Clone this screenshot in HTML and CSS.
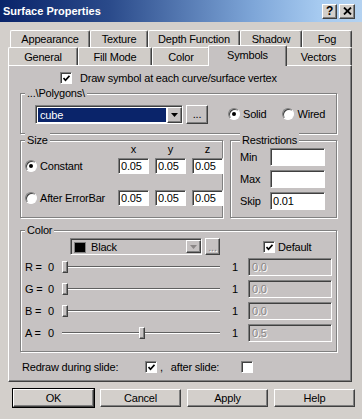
FILE: index.html
```html
<!DOCTYPE html>
<html>
<head>
<meta charset="utf-8">
<link rel="stylesheet" href="styles.css">
</head>
<body>
<div class="titlebar">
  <span class="title">Surface Properties</span>
  <div class="tbtns">
    <span class="tbtn q">?</span>
    <span class="tbtn x"><svg width="9" height="8" viewBox="0 0 9 8"><path d="M1 0.5 L8 7.5 M8 0.5 L1 7.5" stroke="#000" stroke-width="1.8"/></svg></span>
  </div>
</div>

<div class="tabs">
  <div class="tabrow row1">
    <span class="tab w-app">Appearance</span>
    <span class="tab w-tex">Texture</span>
    <span class="tab w-dep">Depth Function</span>
    <span class="tab w-sha">Shadow</span>
    <span class="tab w-fog">Fog</span>
  </div>
  <div class="tabrow row2">
    <span class="tab w-gen">General</span>
    <span class="tab w-fil">Fill Mode</span>
    <span class="tab w-col">Color</span>
    <span class="tab w-sym sel">Symbols</span>
    <span class="tab w-vec">Vectors</span>
  </div>
</div>

<div class="panel">
  <div class="chkrow">
    <span class="chk"><svg width="7" height="7" viewBox="0 0 7 7"><polyline points="0.5,3 2.5,5.2 6.5,0.8" fill="none" stroke="#000" stroke-width="1.7"/></svg></span>
    <span class="chklabel">Draw symbol at each curve/surface vertex</span>
  </div>

  <div class="group g-poly">
    <span class="legend">...\Polygons\</span>
    <div class="combo combo-poly">
      <span class="combo-val">cube</span>
      <span class="drop"><svg width="7" height="4" viewBox="0 0 7 4"><polygon points="0,0 7,0 3.5,4" fill="#000"/></svg></span>
    </div>
    <span class="btn dots">...</span>
    <span class="radio on r-solid"></span><span class="rlabel">Solid</span>
    <span class="radio r-wired"></span><span class="rlabel">Wired</span>
  </div>

  <div class="midrow">
    <div class="group g-size">
      <span class="legend">Size</span>
      <div class="size-grid">
        <span></span><span class="hdr">x</span><span class="hdr">y</span><span class="hdr">z</span>
        <span class="rcell"><span class="radio on"></span><span class="rlabel">Constant</span></span>
        <span class="field">0.05</span><span class="field">0.05</span><span class="field">0.05</span>
        <span class="rcell"><span class="radio"></span><span class="rlabel">After ErrorBar</span></span>
        <span class="field">0.05</span><span class="field">0.05</span><span class="field">0.05</span>
      </div>
    </div>
    <div class="group g-restr">
      <span class="legend lg-restr">Restrictions</span>
      <div class="restr-grid">
        <span class="rl">Min</span><span class="field tall"></span>
        <span class="rl">Max</span><span class="field tall"></span>
        <span class="rl">Skip</span><span class="field tall">0.01</span>
      </div>
    </div>
  </div>

  <div class="group g-color">
    <span class="legend">Color</span>
    <div class="colortop">
      <div class="combo combo-color">
        <span class="swatch"></span>
        <span class="cname">Black</span>
        <span class="drop dis"><svg width="7" height="4" viewBox="0 0 7 4"><polygon points="0,0 7,0 3.5,4" fill="#8a8686"/></svg></span>
      </div>
      <span class="btn dots small dis-text">...</span>
      <span class="chk def"><svg width="7" height="7" viewBox="0 0 7 7"><polyline points="0.5,3 2.5,5.2 6.5,0.8" fill="none" stroke="#000" stroke-width="1.7"/></svg></span>
      <span class="chklabel">Default</span>
    </div>
    <div class="srow">
      <span>R =</span><span class="zero">0</span>
      <span class="slider"><span class="track"></span><span class="thumb" style="left:0px"></span></span>
      <span class="one">1</span><span class="dfield">0.0</span>
    </div>
    <div class="srow">
      <span>G =</span><span class="zero">0</span>
      <span class="slider"><span class="track"></span><span class="thumb" style="left:0px"></span></span>
      <span class="one">1</span><span class="dfield">0.0</span>
    </div>
    <div class="srow">
      <span>B =</span><span class="zero">0</span>
      <span class="slider"><span class="track"></span><span class="thumb" style="left:0px"></span></span>
      <span class="one">1</span><span class="dfield">0.0</span>
    </div>
    <div class="srow">
      <span>A =</span><span class="zero">0</span>
      <span class="slider"><span class="track"></span><span class="thumb" style="left:77px"></span></span>
      <span class="one">1</span><span class="dfield">0.5</span>
    </div>
  </div>

  <div class="redraw">
    <span class="rd-label">Redraw during slide:</span>
    <span class="chk"><svg width="7" height="7" viewBox="0 0 7 7"><polyline points="0.5,3 2.5,5.2 6.5,0.8" fill="none" stroke="#000" stroke-width="1.7"/></svg></span>
    <span class="comma">,</span>
    <span class="after">after slide:</span>
    <span class="chk"></span>
  </div>
</div>

<div class="buttons">
  <span class="btn pb def-btn">OK</span>
  <span class="btn pb">Cancel</span>
  <span class="btn pb">Apply</span>
  <span class="btn pb">Help</span>
</div>
</body>
</html>
```

FILE: styles.css
```css
* { box-sizing: border-box; }
html, body { margin: 0; padding: 0; }
body {
  width: 362px;
  height: 419px;
  overflow: hidden;
  background: #d3cfcb;
  font: 11px/14px "Liberation Sans", Arial, sans-serif;
  letter-spacing: -0.2px;
  color: #000;
}

/* title bar */
.titlebar {
  height: 22px;
  display: flex;
  align-items: center;
  justify-content: space-between;
  padding: 0 7px 0 3px;
  background: linear-gradient(to right, #0a246a 0%, #2a4a8a 30%, #7ea6d8 70%, #a6caf0 88%, #b4d2f0 100%);
}
.title { color: #fff; font-weight: bold; font-size: 11px; letter-spacing: 0; }
.tbtns { display: flex; gap: 2px; }
.tbtn {
  width: 15px; height: 15px;
  display: flex; align-items: center; justify-content: center;
  background: #d3cfcb;
  border-top: 1px solid #fff; border-left: 1px solid #fff;
  border-right: 1px solid #404040; border-bottom: 1px solid #404040;
  box-shadow: inset -1px -1px 0 #808080;
  font-weight: bold; font-size: 12px;
}
.tbtn.x { width: 16px; }

/* tabs */
.tabs { padding-top: 8px; }
.tabrow { display: flex; }
.row1 { padding-left: 10px; height: 17px; }
.row2 { padding-left: 8px; height: 18px; }
.tab {
  display: flex; align-items: center; justify-content: center;
  flex: 0 0 auto;
  border-top: 1px solid #fff;
  border-left: 1px solid #fff;
  border-right: 1px solid #404040;
  border-radius: 2px 2px 0 0;
  box-shadow: inset -1px 0 0 #808080;
  background: #d0ccc8;
}
.w-app { width: 80px; } .w-tex { width: 58px; } .w-dep { width: 92px; } .w-sha { width: 62px; } .w-fog { width: 50px; }
.w-gen { width: 70px; } .w-fil { width: 74px; } .w-col { width: 58px; } .w-sym { width: 75px; } .w-vec { width: 67px; }
.tab.sel {
  width: 79px;
  margin: -2px -2px -1px;
  height: 21px;
  padding-bottom: 3px;
  position: relative;
  z-index: 1;
  background: #c6c2c2;
}

/* panel */
.panel {
  margin-left: 8px;
  width: 344px;
  height: 317px;
  background: #c6c2c2;
  border-top: 1px solid #fff;
  border-left: 1px solid #fff;
  border-right: 1px solid #404040;
  border-bottom: 1px solid #404040;
  box-shadow: inset -1px -1px 0 #808080;
  padding: 5px 0 0 11px;
  display: flex;
  flex-direction: column;
}

.chkrow { display: flex; align-items: center; height: 14px; margin-left: 40px; }
.chk {
  width: 12px; height: 12px;
  flex: 0 0 auto;
  display: flex; align-items: center; justify-content: center;
  background: #fff;
  border-top: 1px solid #808080; border-left: 1px solid #808080;
  border-right: 1px solid #fff; border-bottom: 1px solid #fff;
  box-shadow: inset 1px 1px 0 #404040;
  padding: 1px 0 0 1px;
}
.chkrow .chklabel { margin-left: 8px; }

/* group boxes */
.group {
  position: relative;
  border: 1px solid #808080;
  box-shadow: inset 1px 1px 0 #fff, 1px 1px 0 #fff;
}
.legend {
  position: absolute;
  top: -8px; left: 4px;
  padding: 0 2px;
  background: #c6c2c2;
  line-height: 14px;
}
.lg-restr { left: 9px; }

.g-poly {
  margin-top: 8px;
  width: 317px;
  height: 41px;
  display: flex;
  align-items: center;
  padding: 1px 0 0 14px;
}
.combo {
  display: flex;
  align-items: stretch;
  border-top: 1px solid #808080; border-left: 1px solid #808080;
  border-right: 1px solid #fff; border-bottom: 1px solid #fff;
  box-shadow: inset 1px 1px 0 #404040;
  padding: 1px 0 0 1px;
}
.combo-poly { width: 148px; height: 19px; background: #fff; }
.combo-val {
  flex: 1;
  margin: 1px;
  background: #0a246a;
  color: #fff;
  padding-left: 2px;
  display: flex; align-items: center;
}
.drop {
  width: 15px;
  display: flex; align-items: center; justify-content: center;
  background: #c6c2c2;
  border-top: 1px solid #fff; border-left: 1px solid #fff;
  border-right: 1px solid #404040; border-bottom: 1px solid #404040;
  box-shadow: inset -1px -1px 0 #808080;
}
.btn {
  display: flex; align-items: center; justify-content: center;
  background: #c6c2c2;
  border-top: 1px solid #fff; border-left: 1px solid #fff;
  border-right: 1px solid #404040; border-bottom: 1px solid #404040;
  box-shadow: inset -1px -1px 0 #808080;
}
.dots { width: 22px; height: 19px; margin-left: 3px; }
.dis-text { color: #8a8686; text-shadow: 1px 1px 0 #fff; }
.radio {
  width: 12px; height: 12px;
  flex: 0 0 auto;
  border-radius: 50%;
  background: #fff;
  border: 1px solid;
  border-color: #808080 #fff #fff #808080;
  box-shadow: inset 1px 1px 0 #404040;
  display: flex; align-items: center; justify-content: center;
}
.radio.on::after {
  content: "";
  width: 4px; height: 4px;
  border-radius: 50%;
  background: #000;
}
.r-solid { margin-left: 20px; }
.r-wired { margin-left: 16px; }
.rlabel { margin-left: 3px; }

/* size / restrictions */
.midrow { display: flex; margin-top: 6px; }
.g-size { width: 203px; height: 78px; }
.size-grid {
  display: grid;
  grid-template-columns: 87px 31px 31px 31px;
  grid-template-rows: 13px 19px 32px;
  column-gap: 6px;
  align-items: end;
  padding: 1px 0 0 4px;
}
.hdr { text-align: center; align-self: center; }
.rcell { display: flex; align-items: center; height: 16px; }
.field {
  height: 16px;
  background: #fff;
  border-top: 1px solid #808080; border-left: 1px solid #808080;
  border-right: 1px solid #fff; border-bottom: 1px solid #fff;
  box-shadow: inset 1px 1px 0 #404040;
  padding-left: 2px;
  display: flex; align-items: center;
}
.field.tall { height: 18px; }
.g-restr { width: 107px; height: 78px; margin-left: 7px; }
.restr-grid {
  display: grid;
  grid-template-columns: 30px 55px;
  grid-auto-rows: 18px;
  row-gap: 4px;
  align-items: center;
  padding: 7px 0 0 9px;
}

/* color */
.g-color {
  margin-top: 12px;
  width: 317px;
  height: 122px;
  padding: 7px 4px 0 4px;
}
.colortop { display: flex; align-items: center; height: 17px; }
.combo-color { width: 132px; height: 17px; margin-left: 45px; padding: 1px 0 0 3px; align-items: center; }
.swatch { width: 12px; height: 11px; background: #000; border: 1px solid #808080; }
.cname { flex: 1; margin-left: 5px; }
.combo-color .drop { height: 13px; align-self: flex-start; }
.dots.small { width: 15px; height: 17px; margin-left: 3px; }
.chk.def { margin-left: 43px; }
.colortop .chklabel { margin-left: 3px; }

.srow {
  display: grid;
  grid-template-columns: 21px 14px 164px 24px 84px;
  align-items: center;
  height: 18px;
  margin-top: 4px;
}
.colortop + .srow { margin-top: 3px; }
.zero { padding-left: 2px; }
.one { padding-left: 8px; }
.slider { position: relative; height: 12px; margin: 0 4px 0 2px; }
.track {
  display: block;
  margin-top: 5px;
  height: 2px;
  border-top: 1px solid #606060;
  border-bottom: 1px solid #fff;
}
.thumb {
  position: absolute;
  top: 0;
  width: 6px; height: 12px;
  background: #c6c2c2;
  border-top: 1px solid #fff; border-left: 1px solid #fff;
  border-right: 1px solid #404040; border-bottom: 1px solid #404040;
  box-shadow: inset -1px -1px 0 #808080;
}
.dfield {
  height: 18px;
  border-top: 1px solid #808080; border-left: 1px solid #808080;
  border-right: 1px solid #fff; border-bottom: 1px solid #fff;
  box-shadow: inset 1px 1px 0 #404040;
  padding-left: 3px;
  display: flex; align-items: center;
  color: #8a8686;
  text-shadow: 1px 1px 0 #fff;
}

/* redraw row */
.redraw { display: flex; align-items: center; height: 14px; margin-top: 8px; margin-left: 2px; }
.rd-label { width: 123px; }
.comma { margin-left: 3px; }
.after { margin-left: 8px; width: 70px; }

/* bottom buttons */
.buttons { display: flex; gap: 6px; padding-left: 13px; margin-top: 7px; }
.pb { width: 81px; height: 18px; background: #d3cfcb; }
.def-btn { outline: 1px solid #000; }
```
